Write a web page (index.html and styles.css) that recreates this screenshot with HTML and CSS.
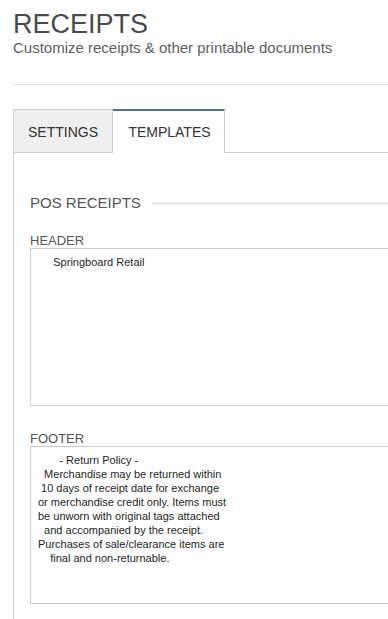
FILE: index.html
```html
<!DOCTYPE html>
<html lang="en">
<head>
<meta charset="utf-8">
<title>Receipts</title>
<link rel="stylesheet" href="styles.css">
</head>
<body>
<div class="page">
  <header class="page-head">
    <h1 class="title">RECEIPTS</h1>
    <p class="subtitle">Customize receipts &amp; other printable documents</p>
  </header>
  <hr class="divider">
  <nav class="tabs">
    <button class="tab tab-settings">SETTINGS</button>
    <button class="tab tab-active">TEMPLATES</button>
    <div class="tab-fill"></div>
  </nav>
  <section class="panel">
    <div class="section-title">
      <h2 class="section-name">POS RECEIPTS</h2>
      <div class="section-rule"></div>
    </div>
    <label class="field-label" for="hdr">HEADER</label>
    <textarea id="hdr" class="field">     Springboard Retail</textarea>
    <label class="field-label footer-label" for="ftr">FOOTER</label>
    <textarea id="ftr" class="field">       - Return Policy -
  Merchandise may be returned within
 10 days of receipt date for exchange
or merchandise credit only. Items must
be unworn with original tags attached
  and accompanied by the receipt.
Purchases of sale/clearance items are
    final and non-returnable.</textarea>
  </section>
</div>
</body>
</html>
```
FILE: styles.css
```css
html, body {
  margin: 0;
  padding: 0;
  height: 100%;
  overflow: hidden;
  background: #fff;
}

body {
  font-family: "Liberation Sans", Arial, sans-serif;
}

.page {
  padding: 9px 0 0 13px;
  display: flex;
  flex-direction: column;
  height: 100%;
  box-sizing: border-box;
}

.page-head {
  display: flex;
  flex-direction: column;
}

.title {
  margin: 0;
  font-size: 27px;
  line-height: 30px;
  font-weight: normal;
  color: #4a4a4a;
}

.subtitle {
  margin: 0;
  font-size: 15px;
  line-height: 18px;
  color: #5e5e5e;
}

.divider {
  margin: 27px 0 0 0;
  border: 0;
  border-top: 1px solid #e6e6e6;
  height: 0;
}

.tabs {
  display: flex;
  margin-top: 24px;
  height: 44px;
  box-sizing: border-box;
}

.tab {
  font-family: "Liberation Sans", Arial, sans-serif;
  font-size: 14px;
  color: #333;
  background: #fff;
  padding: 2px 0 0 0;
  margin: 0;
  box-sizing: border-box;
  height: 44px;
  cursor: pointer;
}

.tab-settings {
  width: 100px;
  background: #efefef;
  border: 1px solid #cfcfcf;
}

.tab-active {
  width: 112px;
  border: 0;
  border-top: 2px solid #5b7089;
  border-right: 1px solid #cfcfcf;
  padding-top: 0;
  padding-left: 2px;
}

.tab-fill {
  flex: 1;
  border-bottom: 1px solid #cfcfcf;
}

.panel {
  flex: 1;
  border-left: 1px solid #cfcfcf;
  padding: 40px 0 0 16px;
  display: flex;
  flex-direction: column;
  align-items: stretch;
}

.section-title {
  display: flex;
  align-items: center;
  gap: 11px;
  height: 20px;
}

.section-name {
  margin: 0;
  font-size: 15px;
  line-height: 20px;
  font-weight: normal;
  color: #555;
}

.section-rule {
  flex: 1;
  border-top: 1px solid #dcdcdc;
}

.field-label {
  display: block;
  margin-top: 20px;
  font-size: 13px;
  line-height: 15px;
  color: #555;
}

.footer-label {
  margin-top: 25px;
}

.field {
  display: block;
  height: 158px;
  box-sizing: border-box;
  margin: 0;
  padding: 6px 7px;
  border: 1px solid #cccccc;
  border-right: 0;
  font-family: "Liberation Sans", Arial, sans-serif;
  font-size: 11px;
  line-height: 14px;
  color: #1e1e1e;
  resize: none;
  white-space: pre;
  overflow: hidden;
  outline: none;
}
```
